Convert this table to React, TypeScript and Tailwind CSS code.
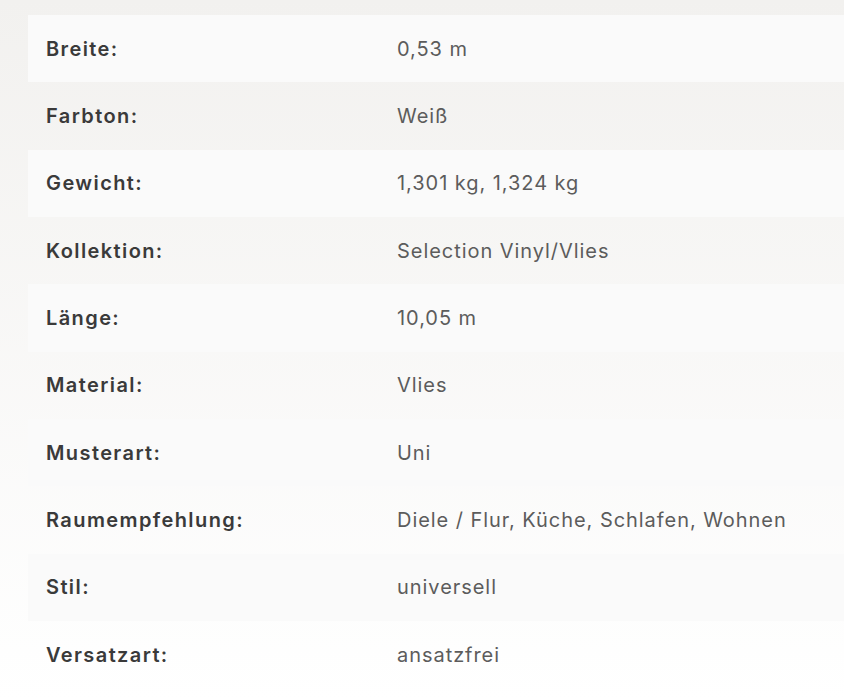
import React from "react";

const rows: [string, string][] = [
  ["Breite:", "0,53 m"],
  ["Farbton:", "Weiß"],
  ["Gewicht:", "1,301 kg, 1,324 kg"],
  ["Kollektion:", "Selection Vinyl/Vlies"],
  ["Länge:", "10,05 m"],
  ["Material:", "Vlies"],
  ["Musterart:", "Uni"],
  ["Raumempfehlung:", "Diele / Flur, Küche, Schlafen, Wohnen"],
  ["Stil:", "universell"],
  ["Versatzart:", "ansatzfrei"],
];

export default function App() {
  return (
    <div
      className="min-h-[700px] w-[844px] overflow-hidden bg-gradient-to-b from-[#f2f1ef] to-white pt-[15px] pl-[28px]"
      style={{ fontFamily: "Inter, 'Open Sans', sans-serif" }}
    >
      {rows.map(([k, v], i) => (
        <div
          key={k}
          className={
            "grid h-[67.33px] grid-cols-[351px_1fr] items-center pl-[18px] " +
            (i % 2 === 0 ? "bg-[#fafafa]" : "")
          }
        >
          <div className="text-[20px] font-semibold tracking-[1.4px] text-[#3a3a3a]">{k}</div>
          <div className="text-[20px] font-normal tracking-[0.95px] text-[#5c5c5c]">{v}</div>
        </div>
      ))}
    </div>
  );
}
